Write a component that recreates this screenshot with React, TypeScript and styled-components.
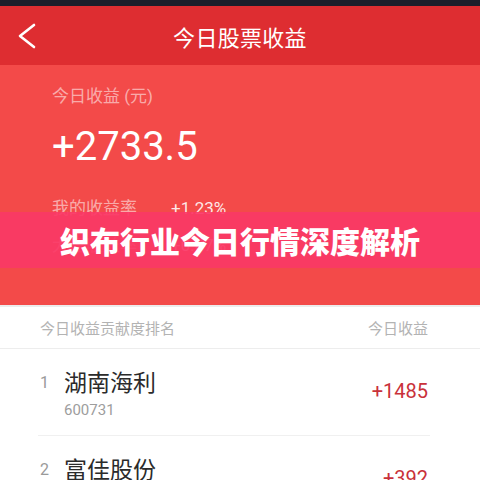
import React from 'react';
import styled, { createGlobalStyle } from 'styled-components';

/*
 * Styles.
 */

const GlobalStyle = createGlobalStyle`
  html, body {
    margin: 0;
    padding: 0;
    background: #ffffff;
  }

  body {
    font-family: Roboto, "Noto Sans CJK SC", sans-serif;
  }
`;

const Page = styled.div`
  width: 480px;
  height: 480px;
  overflow: hidden;
  display: flex;
  flex-direction: column;

  & > * {
    flex-shrink: 0;
  }
`;

const StatusBar = styled.div`
  height: 6px;
  background-color: #1d1e2b;
`;

const Header = styled.div`
  height: 59px;
  background-color: #de2d31;
  display: flex;
  align-items: center;
  justify-content: center;
  position: relative;
`;

const BackButton = styled.div`
  position: absolute;
  left: 17px;
  top: 16px;
  width: 20px;
  height: 28px;
`;

const HeaderTitle = styled.div`
  color: #ffffff;
  font-size: 22px;
  letter-spacing: 0.3px;
`;

const Summary = styled.div`
  position: relative;
  height: 240px;
  background-color: #f34a49;
  padding: 19px 0 0 52px;
  box-sizing: border-box;
  display: flex;
  flex-direction: column;
`;

const SummaryLabel = styled.div`
  font-size: 17px;
  line-height: 24px;
  color: rgba(255, 255, 255, 0.55);
`;

const SummaryValue = styled.div`
  margin-top: 14px;
  font-size: 40px;
  line-height: 50px;
  color: #ffffff;
`;

const RateRow = styled.div<{ $gap: number }>`
  margin-top: ${(p) => p.$gap}px;
  display: flex;
  align-items: center;
  font-size: 17px;
  line-height: 24px;
`;

const RateLabel = styled.span`
  width: 119px;
  color: rgba(255, 255, 255, 0.55);
`;

const RateValue = styled.span`
  color: rgba(255, 255, 255, 0.88);
`;

const Banner = styled.div`
  position: absolute;
  left: 0;
  right: 0;
  top: 147px;
  height: 56px;
  background-color: rgba(250, 56, 102, 0.92);
  display: flex;
  align-items: center;
  justify-content: center;
`;

const BannerText = styled.div`
  color: #ffffff;
  font-family: "Noto Sans CJK SC", sans-serif;
  font-weight: 900;
  font-size: 30px;
`;

const Ranking = styled.div`
  border-top: 2px solid #ececec;
  background: #ffffff;
`;

const RankingHeader = styled.div`
  height: 41px;
  border-bottom: 1px solid #ededed;
  display: flex;
  align-items: center;
  justify-content: space-between;
  padding: 0 52px 0 40px;
  font-size: 15px;
  color: #b3b3b3;
`;

const StockRow = styled.div`
  height: 86px;
  margin: 0 50px 0 38px;
  border-bottom: 1px solid #f0f0f0;
  display: flex;
  align-items: flex-start;
`;

const RankNumber = styled.div`
  width: 24px;
  padding-left: 2px;
  margin-top: 24px;
  font-size: 16px;
  color: #9a9a9a;
`;

const StockInfo = styled.div`
  flex: 1;
  display: flex;
  flex-direction: column;
  margin-top: 20px;
`;

const StockName = styled.div`
  font-size: 23px;
  line-height: 30px;
  color: #2b2b2b;
`;

const StockCode = styled.div`
  font-size: 15px;
  line-height: 20px;
  color: #9d9d9d;
  margin-top: 1px;
`;

const StockGain = styled.div`
  font-size: 20px;
  line-height: 26px;
  color: #c9313a;
  margin-top: 29px;
  margin-right: 2px;
`;

/*
 * Data.
 */

const stocks = [
  { rank: 1, name: '湖南海利', code: '600731', gain: '+1485' },
  { rank: 2, name: '富佳股份', code: '603219', gain: '+392' }
];

/*
 * App component.
 */

function App() {
  return (
    <Page>
      <GlobalStyle />
      <StatusBar />

      <Header>
        <BackButton>
          <svg width="20" height="28" viewBox="0 0 20 28">
            <polyline
              points="17,3 3,14 17,25"
              fill="none"
              stroke="#ffffff"
              strokeWidth="2.6"
              strokeLinecap="round"
              strokeLinejoin="round"
            />
          </svg>
        </BackButton>

        <HeaderTitle>{'今日股票收益'}</HeaderTitle>
      </Header>

      <Summary>
        <SummaryLabel>{'今日收益 (元)'}</SummaryLabel>
        <SummaryValue>{'+2733.5'}</SummaryValue>

        <RateRow $gap={24}>
          <RateLabel>{'我的收益率'}</RateLabel>
          <RateValue>{'+1.23%'}</RateValue>
        </RateRow>

        <RateRow $gap={13}>
          <RateLabel>{'大盘收益率'}</RateLabel>
          <RateValue>{'+0.07%'}</RateValue>
        </RateRow>

        <Banner>
          <BannerText>{'织布行业今日行情深度解析'}</BannerText>
        </Banner>
      </Summary>

      <Ranking>
        <RankingHeader>
          <span>{'今日收益贡献度排名'}</span>
          <span>{'今日收益'}</span>
        </RankingHeader>

        {stocks.map((stock) => (
          <StockRow key={stock.code}>
            <RankNumber>{stock.rank}</RankNumber>
            <StockInfo>
              <StockName>{stock.name}</StockName>
              <StockCode>{stock.code}</StockCode>
            </StockInfo>
            <StockGain>{stock.gain}</StockGain>
          </StockRow>
        ))}
      </Ranking>
    </Page>
  );
}

export default App;
